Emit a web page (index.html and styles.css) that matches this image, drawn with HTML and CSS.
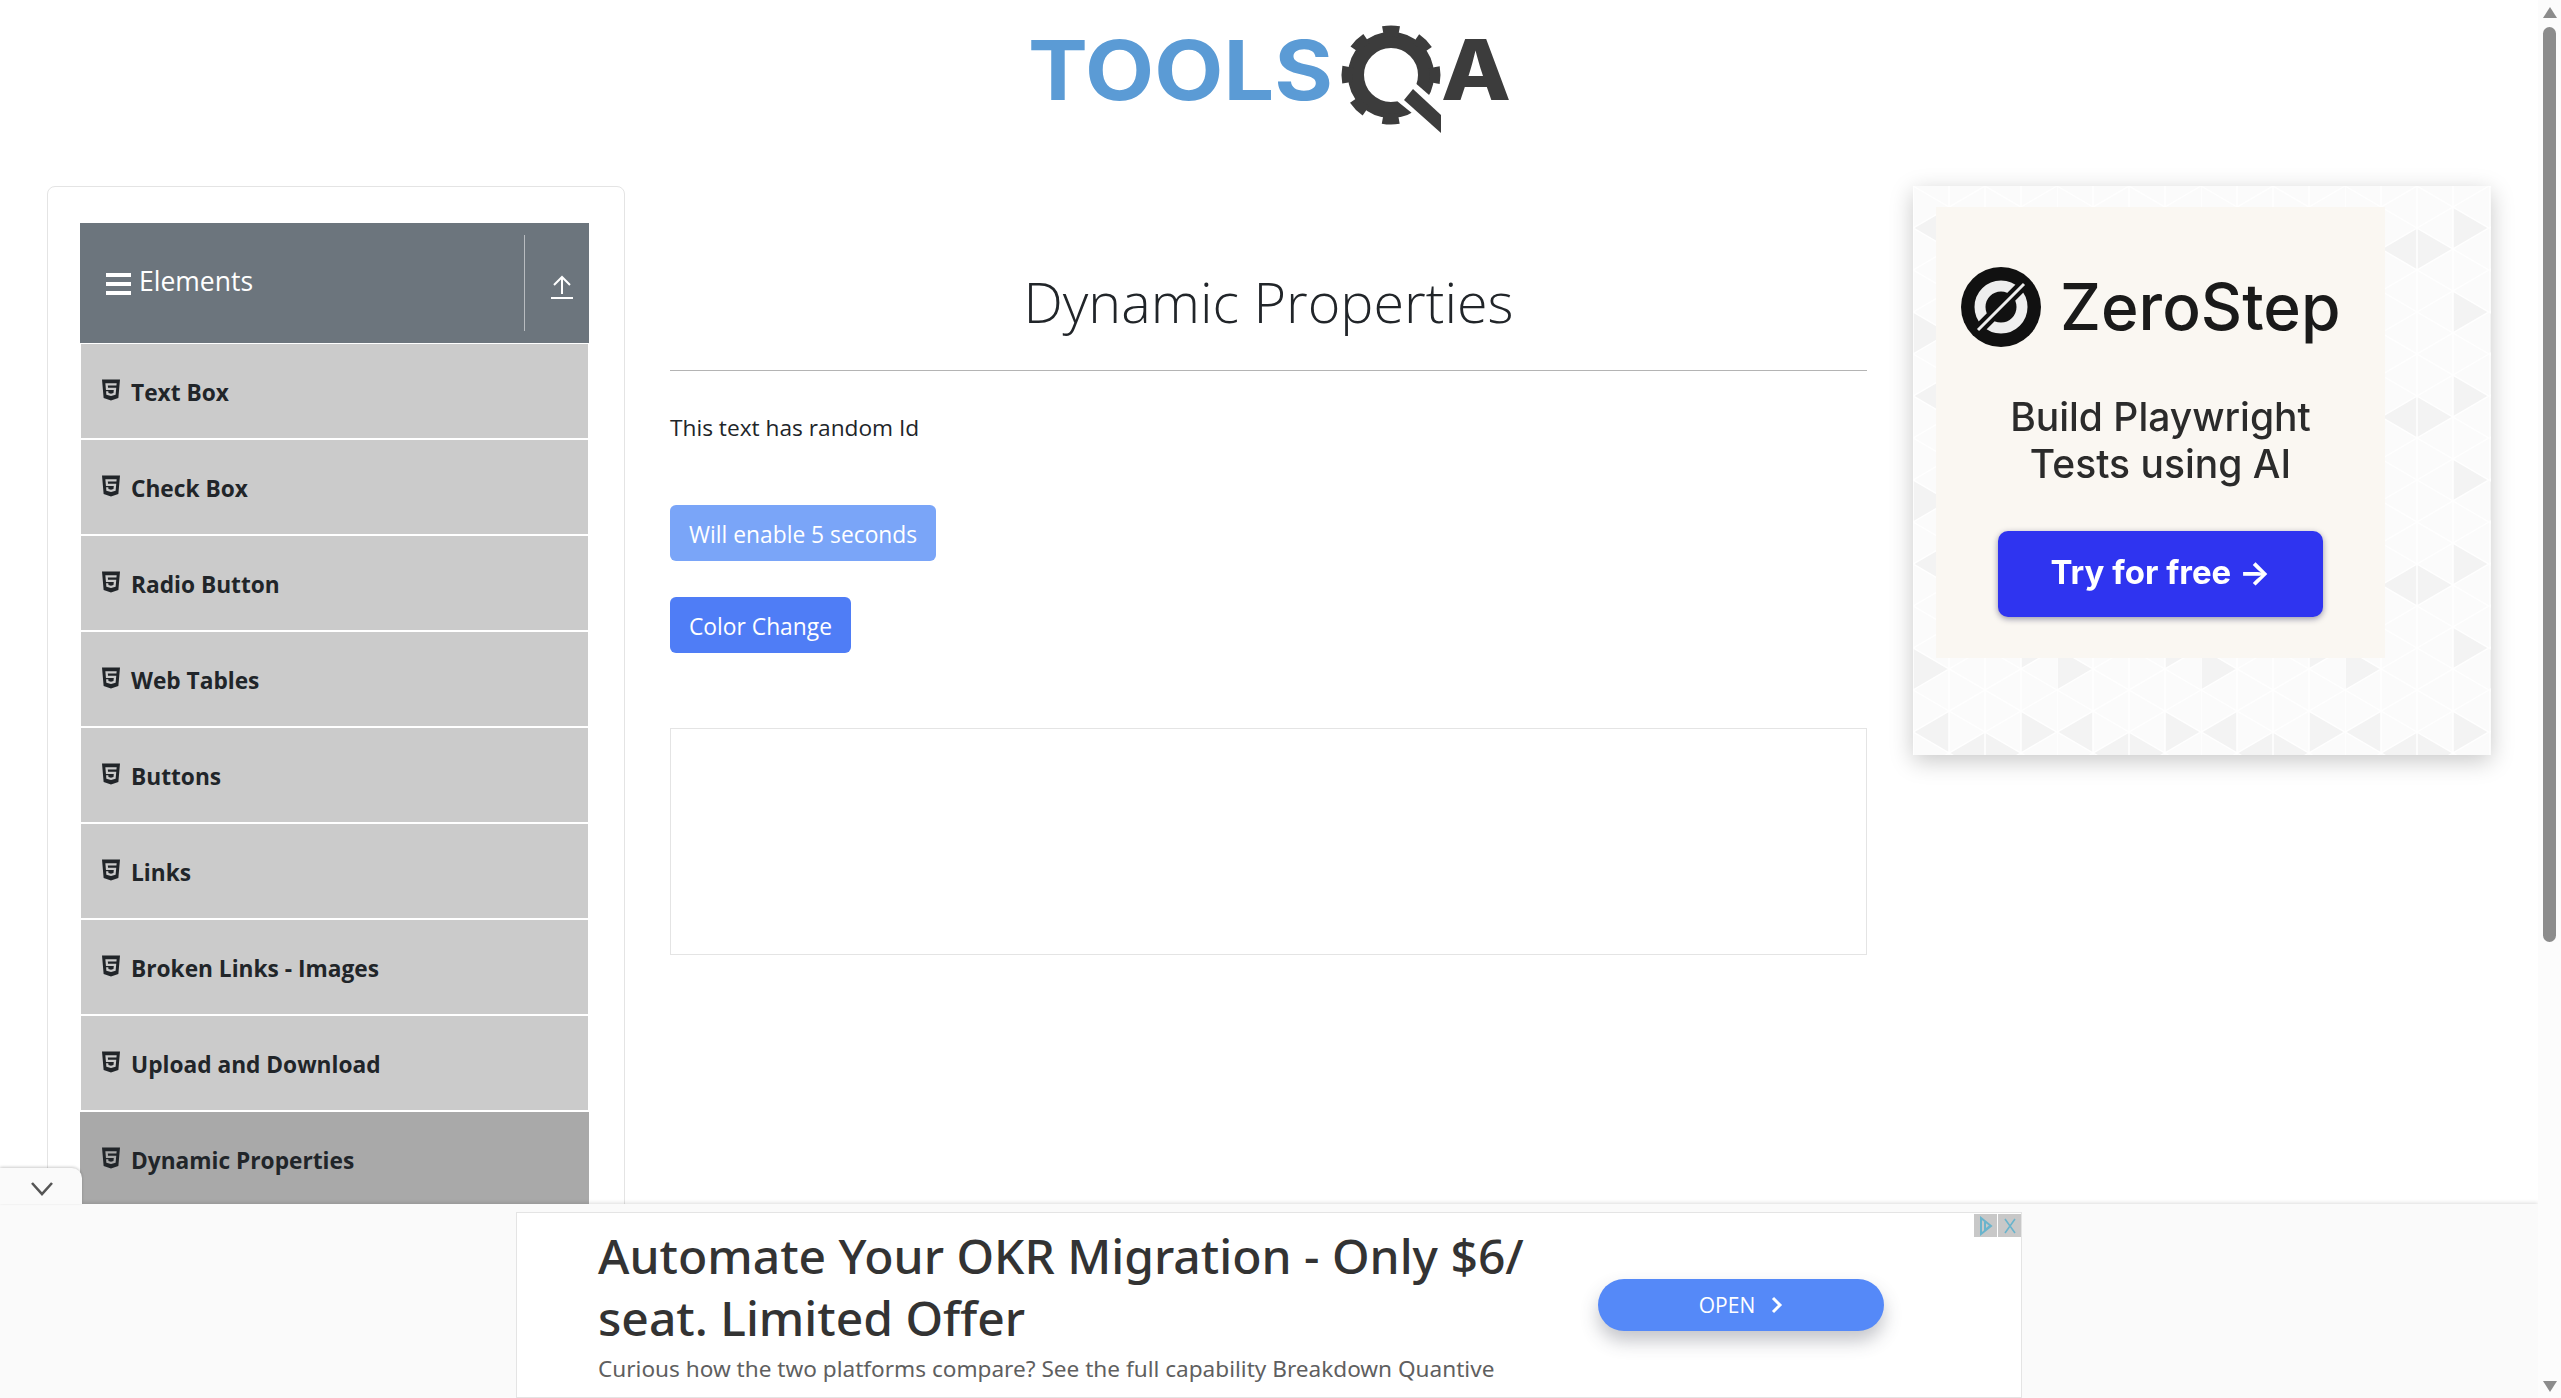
FILE: index.html
```html
<!DOCTYPE html>
<html lang="en">
<head>
<meta charset="utf-8">
<title>Dynamic Properties</title>
<link rel="stylesheet" href="styles.css">
</head>
<body>
<svg class="defs" width="0" height="0">
  <symbol id="h5" viewBox="0 0 384 512"><path d="M0 32l34.9 395.8L191.5 480l157.6-52.2L384 32H0zm308.2 127.9H124.4l4.1 49.4h175.6l-13.6 148.4-97.9 27v.3h-1.1l-98.7-27.3-6-75.8h47.7L138 320l53.5 14.5 53.7-14.5 6-62.2H84.3L71.5 112.2h241.1l-4.4 47.7z"/></symbol>
</svg>
<div class="viewport">
  <header class="top">
    <svg class="logo" viewBox="0 0 483 111" width="483" height="111">
      <text class="logo-tools" x="0" y="77" textLength="305" lengthAdjust="spacingAndGlyphs">TOOLS</text>
      <g transform="translate(363 52)">
        <circle r="35" class="gear-body"/>
        <circle r="44" class="gear-teeth" transform="rotate(-100.4)"/>
      </g>
      <path class="gear-cut" d="M369 78L385 58L416 85V116Z"/>
      <path class="gear-handle" d="M376 77L385 66L413 92V110Z"/>
      <text class="logo-a" x="413" y="77" textLength="70" lengthAdjust="spacingAndGlyphs">A</text>
    </svg>
  </header>
  <main class="main">
    <aside class="card">
      <div class="group-head">
        <span class="burger"><i></i><i></i><i></i></span>
        <span class="group-title">Elements</span>
        <span class="group-tool">
          <svg width="24" height="26" viewBox="0 0 24 26"><path d="M12 20V4M4 11l8-8 8 8M1 24h22" fill="none" stroke="#fff" stroke-width="2"/></svg>
        </span>
      </div>
      <ul class="menu">
        <li class="menu-item"><svg class="h5"><use href="#h5"/></svg>Text Box</li>
        <li class="menu-item"><svg class="h5"><use href="#h5"/></svg>Check Box</li>
        <li class="menu-item"><svg class="h5"><use href="#h5"/></svg>Radio Button</li>
        <li class="menu-item"><svg class="h5"><use href="#h5"/></svg>Web Tables</li>
        <li class="menu-item"><svg class="h5"><use href="#h5"/></svg>Buttons</li>
        <li class="menu-item"><svg class="h5"><use href="#h5"/></svg>Links</li>
        <li class="menu-item"><svg class="h5"><use href="#h5"/></svg>Broken Links - Images</li>
        <li class="menu-item"><svg class="h5"><use href="#h5"/></svg>Upload and Download</li>
        <li class="menu-item active"><svg class="h5"><use href="#h5"/></svg>Dynamic Properties</li>
      </ul>
    </aside>
    <section class="content">
      <h1 class="title">Dynamic Properties</h1>
      <hr class="rule">
      <p class="random">This text has random Id</p>
      <button class="btn btn-off">Will enable 5 seconds</button>
      <button class="btn">Color Change</button>
      <div class="empty"></div>
    </section>
    <aside class="promo">
      <svg class="promo-bg" width="578" height="569">
        <defs>
          <pattern id="tri" width="144" height="168" patternUnits="userSpaceOnUse">
            <rect width="144" height="168" fill="#fbfbfb"/>
            <path d="M72 42V84L36 63ZM72 42V84L108 63ZM108 105V147L144 126ZM0 126V168L36 147ZM36 21V63L0 42ZM108 21V63L144 42Z" fill="#f3f3f3"/>
            <path d="M0 0V168M36 0V168M72 0V168M108 0V168M0 0L144 84M0 42L144 126M0 84L144 168M0 126L72 168M72 0L144 42M0 84L144 0M0 126L144 42M0 168L144 84M72 168L144 126M0 42L72 0" stroke="#fff" stroke-width="1.5" fill="none"/>
          </pattern>
        </defs>
        <rect width="578" height="569" fill="url(#tri)"/>
      </svg>
      <div class="promo-inner">
        <div class="zs-brand">
          <svg class="zs-mark" viewBox="0 0 80 80" width="80" height="80">
            <circle cx="40" cy="40" r="40" fill="#111"/>
            <circle cx="40" cy="40" r="21" fill="none" stroke="#eee" stroke-width="11"/>
            <path d="M14 66L66 14" stroke="#111" stroke-width="11"/>
            <path d="M17 63L63 17" stroke="#eee" stroke-width="3"/>
          </svg>
          <span class="zs-name">ZeroStep</span>
        </div>
        <p class="zs-tag">Build Playwright<br>Tests using AI</p>
        <div class="zs-btn">Try for free →</div>
      </div>
    </aside>
  </main>
  <div class="dock">
    <div class="dock-tab">
      <svg width="24" height="16" viewBox="0 0 24 16"><path d="M2 2l10 11L22 2" fill="none" stroke="#555" stroke-width="2.6"/></svg>
    </div>
    <div class="banner">
      <div class="banner-copy">
        <div class="banner-head">Automate Your OKR Migration - Only $6/<br>seat. Limited Offer</div>
        <div class="banner-sub">Curious how the two platforms compare? See the full capability Breakdown Quantive</div>
      </div>
      <div class="banner-btn">OPEN<svg width="12" height="18" viewBox="0 0 12 18"><path d="M2 2l7 7-7 7" fill="none" stroke="#fff" stroke-width="3"/></svg></div>
      <div class="adchoice">
        <span class="adbox"><svg width="16" height="20" viewBox="0 0 16 20"><path d="M3 2v16l10-8Z M7 6v8l5-4" fill="none" stroke="#6ab4cc" stroke-width="2"/></svg></span>
        <span class="adbox"><svg width="14" height="18" viewBox="0 0 14 18"><path d="M2 2l10 14M12 2L2 16" fill="none" stroke="#6ab4cc" stroke-width="1.6"/></svg></span>
      </div>
    </div>
  </div>
</div>
<div class="scrollbar">
  <span class="arrow-up"></span>
  <span class="thumb"></span>
  <span class="arrow-down"></span>
</div>
</body>
</html>
```

FILE: styles.css
```css
* { box-sizing: border-box; }
html, body { margin: 0; height: 100%; overflow: hidden; }
body {
  display: flex;
  background: #fff;
  color: #212529;
  font-family: "Open Sans", "Noto Sans", sans-serif;
  font-size: 22.7px;
}
.defs { position: absolute; }
.viewport { position: relative; flex: 1; min-width: 0; height: 1398px; overflow: hidden; }

.top { height: 186px; display: flex; justify-content: center; padding-top: 23px; }
.logo { filter: blur(.6px); overflow: visible; }
.logo-tools { font-family: Inter, sans-serif; font-weight: 700; font-size: 82px; fill: #5b9bd5; }
.logo-a { font-family: Inter, sans-serif; font-weight: 800; font-size: 84px; fill: #3c3c3c; }
.gear-body { fill: none; stroke: #3c3c3c; stroke-width: 16px; }
.gear-teeth { fill: none; stroke: #3c3c3c; stroke-width: 11px; stroke-dasharray: 16 18.56; }
.gear-cut { fill: #fff; }
.gear-handle { fill: #3c3c3c; }

.main { display: flex; align-items: flex-start; padding-left: 47px; }
.card {
  flex: none;
  width: 578px;
  height: 1300px;
  padding: 36px 35px 0 32px;
  border: 1px solid #e4e4e4;
  border-radius: 8px;
}
.group-head {
  display: flex;
  align-items: center;
  height: 120px;
  padding-left: 26px;
  background: #6c757d;
  color: #fff;
}
.burger { display: flex; flex-direction: column; gap: 5px; width: 25px; margin-right: 8px; margin-top: 2px; }
.burger i { display: block; height: 4px; background: #fff; }
.group-title { flex: 1; font-size: 26.5px; font-weight: 400; margin-top: -4px; }
.group-tool {
  display: flex;
  align-items: center;
  justify-content: center;
  align-self: stretch;
  width: 65px;
  margin: 12px 0;
  padding: 8px 0 0 10px;
  border-left: 1px solid #b8bcc0;
}
.menu { list-style: none; margin: 0; padding: 0; }
.menu-item {
  display: flex;
  align-items: center;
  height: 96px;
  margin: 0 1px;
  padding: 2px 0 0 21px;
  background: #cbcbcb;
  border-top: 1px solid #fff;
  border-bottom: 1px solid #fff;
  font-weight: 700;
  font-size: 22.7px;
}
.menu-item.active { margin: 0; padding-left: 22px; background: #a9a9a9; }
.h5 { width: 18px; height: 24px; margin-right: 11px; margin-top: -5px; fill: #212529; }

.content { flex: none; width: 1197px; margin-left: 45px; }
.title {
  margin: 0;
  padding-top: 79px;
  height: 184px;
  text-align: center;
  font-size: 55.7px;
  line-height: 72px;
  font-weight: 300;
}
.rule { margin: 0; border: 0; border-top: 1px solid #b4b4b4; }
.random { margin: 0; padding-top: 39px; line-height: 36px; height: 134px; }
.btn {
  display: block;
  height: 56px;
  margin: 0 0 35px;
  padding: 2px 19px 0;
  border: 0;
  border-radius: 6px;
  background: #4f7df6;
  color: #fff;
  font-family: inherit;
  font-size: 22.8px;
}
.btn-off { background: #7aa5f8; margin-bottom: 36px; }
.empty { height: 227px; margin-top: 75px; border: 1px solid #e4e4e4; }

.promo {
  position: relative;
  flex: none;
  width: 578px;
  height: 569px;
  margin-left: 46px;
  box-shadow: 0 6px 22px rgba(0,0,0,.22);
  font-family: Inter, sans-serif;
}
.promo-bg { position: absolute; inset: 0; }
.promo-inner {
  position: relative;
  width: 449px;
  height: 451px;
  margin: 21px 0 0 23px;
  background: #faf7f2;
  filter: blur(.6px);
  display: flex;
  flex-direction: column;
  align-items: center;
}
.zs-brand { display: flex; align-items: center; gap: 19px; align-self: flex-start; margin: 60px 0 0 25px; }
.zs-name { font-size: 64px; font-weight: 500; color: #1a1a1a; line-height: 80px; }
.zs-tag { margin: 46px 0 0; font-size: 39px; font-weight: 500; line-height: 47px; text-align: center; color: #2b2b2b; }
.zs-btn {
  width: 325px;
  height: 86px;
  margin-top: 44px;
  border-radius: 10px;
  background: #2f34f0;
  color: #fff;
  font-size: 33px;
  font-weight: 700;
  line-height: 83px;
  text-align: center;
  box-shadow: 0 2px 6px rgba(0,0,60,.4);
}

.dock {
  position: absolute;
  left: 0;
  right: 0;
  bottom: 0;
  height: 194px;
  padding-top: 8px;
  background: #fafafa;
  box-shadow: 0 -1px 4px rgba(0,0,0,.14);
  display: flex;
  justify-content: center;
}
.dock-tab {
  position: absolute;
  left: 0;
  top: -36px;
  width: 82px;
  height: 36px;
  padding: 6px 0 0 2px;
  display: flex;
  align-items: center;
  justify-content: center;
  background: #fafafa;
  border-radius: 0 10px 0 0;
  box-shadow: 0 -1px 3px rgba(0,0,0,.2);
}
.banner {
  position: relative;
  width: 1506px;
  display: flex;
  align-items: flex-start;
  padding-left: 81px;
  background: #fff;
  border: 1px solid #e4e4e4;
}
.banner-copy { width: 1000px; padding-top: 12px; }
.banner-head { font-family: "Noto Sans", sans-serif; font-size: 48px; font-weight: 500; line-height: 62px; color: #333; }
.banner-sub { margin-top: 3px; font-family: "Noto Sans", sans-serif; font-size: 22.6px; line-height: 34px; color: #5f5f5f; }
.banner-btn {
  display: flex;
  align-items: center;
  justify-content: center;
  gap: 16px;
  width: 286px;
  height: 52px;
  margin-top: 66px;
  border-radius: 26px;
  background: #5589f8;
  color: #fff;
  font-size: 21px;
  box-shadow: 0 10px 18px rgba(60,64,80,.3);
}
.adchoice { position: absolute; top: 1px; right: 0; display: flex; gap: 1px; }
.adbox { display: flex; align-items: center; justify-content: center; width: 23px; height: 23px; background: #c8c8c8; }

.scrollbar {
  position: relative;
  flex: none;
  width: 23px;
  height: 1398px;
  background: #fcfcfc;
  display: flex;
  flex-direction: column;
  align-items: center;
}
.thumb { width: 13px; height: 915px; border-radius: 7px; background: #8c8c8c; margin-top: 9px; }
.arrow-up, .arrow-down { width: 0; height: 0; border-left: 7px solid transparent; border-right: 7px solid transparent; }
.arrow-up { margin-top: 7px; border-bottom: 11px solid #8c8c8c; }
.arrow-down { position: absolute; bottom: 6px; border-top: 11px solid #8c8c8c; }
```
